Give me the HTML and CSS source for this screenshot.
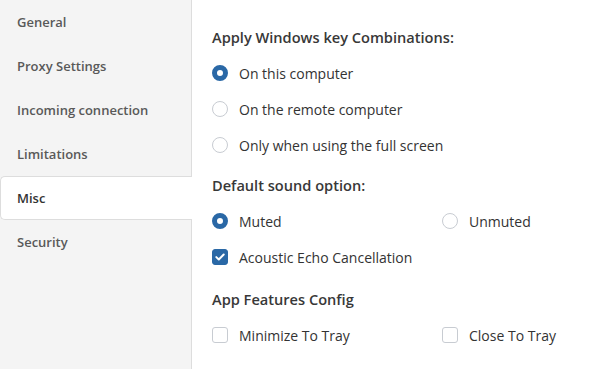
FILE: index.html
```html
<!DOCTYPE html>
<html lang="en">
<head>
    <meta charset="UTF-8">
    <title>Settings - Misc</title>
    <link rel="stylesheet" href="styles.css">
</head>
<body>
    <div class="settings">
        <nav class="sidebar">
            <div class="nav-item">General</div>
            <div class="nav-item">Proxy Settings</div>
            <div class="nav-item">Incoming connection</div>
            <div class="nav-item">Limitations</div>
            <div class="nav-item active">Misc</div>
            <div class="nav-item">Security</div>
        </nav>
        <main class="content">
            <h3 class="section-title">Apply Windows key Combinations:</h3>
            <label class="option"><span class="radio checked"></span>On this computer</label>
            <label class="option"><span class="radio"></span>On the remote computer</label>
            <label class="option"><span class="radio"></span>Only when using the full screen</label>

            <h3 class="section-title">Default sound option:</h3>
            <div class="option-row">
                <label class="option"><span class="radio checked"></span>Muted</label>
                <label class="option"><span class="radio"></span>Unmuted</label>
            </div>
            <label class="option">
                <span class="checkbox checked">
                    <svg width="10" height="8" viewBox="0 0 10 8"><path d="M1.3 4.1 L3.8 6.5 L8.7 1.5" fill="none" stroke="#fff" stroke-width="2" stroke-linecap="round" stroke-linejoin="round"/></svg>
                </span>Acoustic Echo Cancellation
            </label>

            <h3 class="section-title features">App Features Config</h3>
            <div class="option-row">
                <label class="option"><span class="checkbox"></span>Minimize To Tray</label>
                <label class="option"><span class="checkbox"></span>Close To Tray</label>
            </div>
        </main>
    </div>
</body>
</html>
```
FILE: styles.css
```css
body {
    margin: 0;
    font-family: "Open Sans", "Noto Sans", sans-serif;
    color: #333;
    background: #fff;
}
.settings {
    display: flex;
    height: 369px;
}
.sidebar {
    width: 191px;
    flex-shrink: 0;
    background-color: #f4f4f4;
    border-right: 1px solid #ddd;
}
.nav-item {
    height: 44px;
    line-height: 44px;
    padding-left: 17px;
    font-size: 13px;
    font-weight: 600;
    color: #595959;
    box-sizing: border-box;
}
.nav-item.active {
    background-color: #fff;
    color: #333;
    border: 1px solid #ddd;
    border-right: none;
    border-radius: 5px 0 0 5px;
    margin-right: -1px;
    line-height: 42px;
    padding-left: 16px;
}
.content {
    flex: 1;
    padding: 27px 20px 0 20px;
}
.section-title {
    margin: 0 0 8px 0;
    height: 20px;
    line-height: 20px;
    font-size: 14.6px;
    font-weight: 600;
    color: #383838;
}
.option {
    display: flex;
    align-items: center;
    height: 36px;
    font-size: 14px;
    color: #333;
}
.option-row {
    display: grid;
    grid-template-columns: 230px 1fr;
}
.option + .section-title,
.option-row + .section-title {
    margin-top: 12px;
}
.option + .section-title.features {
    margin-top: 14px;
}
.radio {
    width: 16px;
    height: 16px;
    box-sizing: border-box;
    border: 1px solid #c8ccd2;
    border-radius: 50%;
    margin-right: 11px;
    background: #fff;
}
.radio.checked {
    border: 5px solid #2a68a6;
}
.checkbox {
    width: 16px;
    height: 16px;
    box-sizing: border-box;
    border: 1px solid #c8ccd2;
    border-radius: 3px;
    margin-right: 11px;
    background: #fff;
    display: flex;
    align-items: center;
    justify-content: center;
}
.checkbox.checked {
    background: #2a68a6;
    border-color: #2a68a6;
}
```
